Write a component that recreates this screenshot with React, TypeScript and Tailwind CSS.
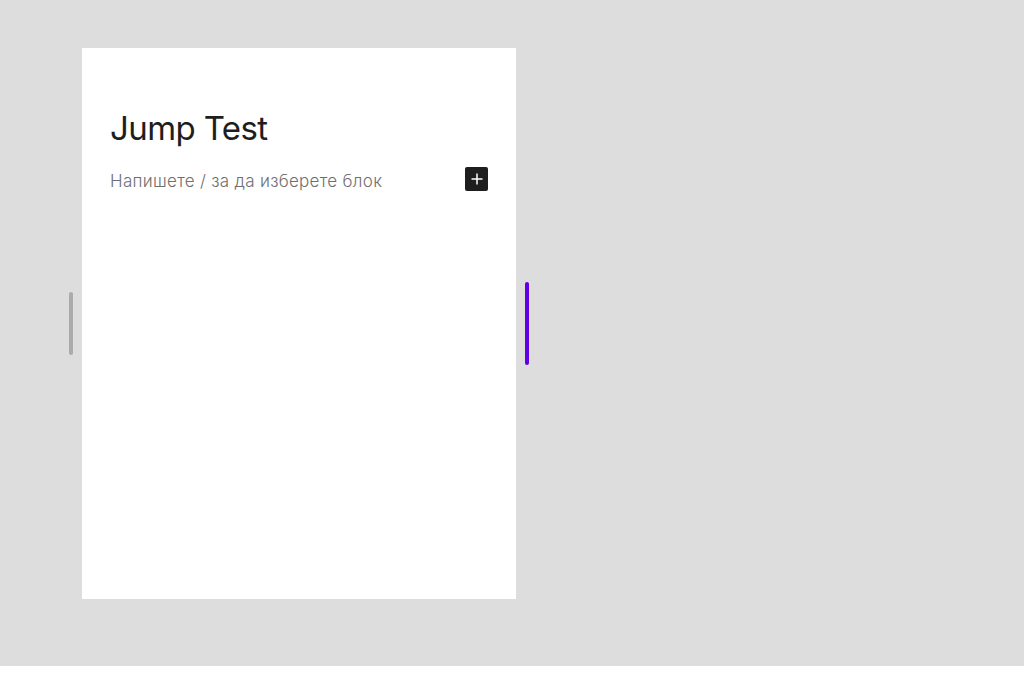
import React from "react";

// Resize handles on either side of the canvas frame
const Handle: React.FC<{ className: string }> = ({ className }) => (
  <div className={`w-[4px] rounded-full ${className}`} />
);

const PlusButton: React.FC = () => (
  <button
    type="button"
    aria-label="Добавяне на блок"
    className="flex h-[24px] w-[23px] shrink-0 items-center justify-center rounded-[2px] bg-[#1e1e1e] text-white"
  >
    <svg width="14" height="14" viewBox="0 0 14 14" fill="none">
      <path d="M7 1.5v11M1.5 7h11" stroke="currentColor" strokeWidth="1.5" />
    </svg>
  </button>
);

export default function App() {
  return (
    <div className="min-h-[682px] bg-white font-['Inter','Noto_Sans',sans-serif]">
      <div className="flex h-[666px] items-start bg-[#dddddd] pl-[69px] pt-[48px]">
        <div className="flex h-[551px] items-center gap-[9px]">
          <Handle className="h-[63px] bg-[#ababab]" />

          {/* Editor canvas */}
          <div className="h-full w-[434px] bg-white px-[28px] pt-[58px]">
            <h1 className="text-[33px] leading-[44px] font-normal tracking-[-0.6px] text-[#1e1e1e]">
              Jump Test
            </h1>
            <div className="mt-[17px] flex items-start justify-between">
              <p className="pt-[2px] text-[17px] leading-[24px] font-light tracking-[0.3px] text-[#6f6f6f]">
                Напишете / за да изберете блок
              </p>
              <PlusButton />
            </div>
          </div>

          <Handle className="h-[83px] bg-[#6100e0]" />
        </div>
      </div>
    </div>
  );
}
